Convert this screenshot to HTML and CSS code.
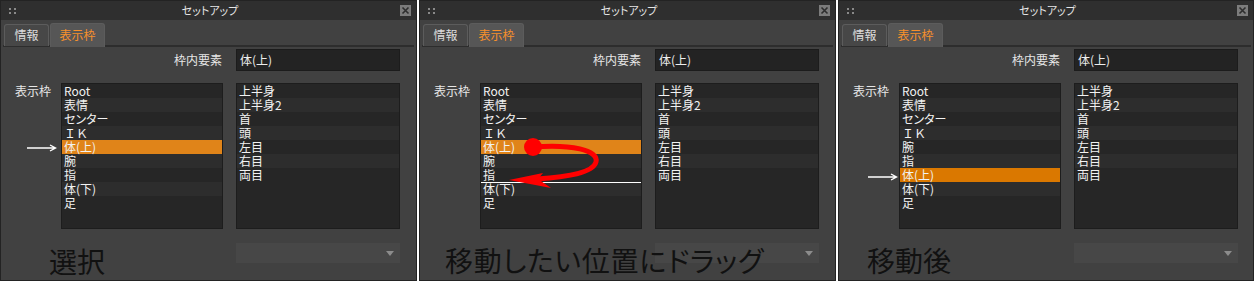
FILE: index.html
```html
<!DOCTYPE html>
<html lang="ja">
  <head>
    <meta charset="utf-8">
    <link rel="stylesheet" href="styles.css">
  </head>
  <body>
    <div class="strip">

    <section class="panel">
      <header class="titlebar">
        <span class="grip"><i></i><i></i><i></i><i></i></span>
        <span class="title">セットアップ</span>
        <span class="close"><svg width="11" height="11" viewBox="0 0 11 11"><path d="M2.5 2.5 L8.5 8.5 M8.5 2.5 L2.5 8.5" stroke="#2e2e2e" stroke-width="1.6"/></svg></span>
      </header>
      <nav class="tabs">
        <span class="tab">情報</span>
        <span class="tab active">表示枠</span>
      </nav>
      <div class="form">
        <label class="flabel">枠内要素</label>
        <div class="field">体(上)</div>
        <label class="llabel">表示枠</label>
        <ul class="list frames">
          <li>Root</li>
          <li>表情</li>
          <li>センター</li>
          <li class="wide">ＩＫ</li>
          <li class="sel">体(上)</li>
          <li>腕</li>
          <li>指</li>
          <li>体(下)</li>
          <li>足</li>
        </ul>
        <ul class="list bones">
          <li>上半身</li>
          <li>上半身2</li>
          <li>首</li>
          <li>頭</li>
          <li>左目</li>
          <li>右目</li>
          <li>両目</li>
        </ul>
        <div class="combo"><span class="caret"></span></div>
      </div>
      <svg class="pointer p-first" width="30" height="8" viewBox="0 0 30 8"><path d="M0 4 H28 M23 1 L28.5 4 L23 7" stroke="#fff" stroke-width="1.4" fill="none"/></svg>
      <p class="caption c-first">選択</p>
    </section>

    <section class="panel">
      <header class="titlebar">
        <span class="grip"><i></i><i></i><i></i><i></i></span>
        <span class="title">セットアップ</span>
        <span class="close"><svg width="11" height="11" viewBox="0 0 11 11"><path d="M2.5 2.5 L8.5 8.5 M8.5 2.5 L2.5 8.5" stroke="#2e2e2e" stroke-width="1.6"/></svg></span>
      </header>
      <nav class="tabs">
        <span class="tab">情報</span>
        <span class="tab active">表示枠</span>
      </nav>
      <div class="form">
        <label class="flabel">枠内要素</label>
        <div class="field">体(上)</div>
        <label class="llabel">表示枠</label>
        <ul class="list frames">
          <li>Root</li>
          <li>表情</li>
          <li>センター</li>
          <li class="wide">ＩＫ</li>
          <li class="sel">体(上)</li>
          <li>腕</li>
          <li>指</li>
          <li class="drop">体(下)</li>
          <li>足</li>
        </ul>
        <ul class="list bones">
          <li>上半身</li>
          <li>上半身2</li>
          <li>首</li>
          <li>頭</li>
          <li>左目</li>
          <li>右目</li>
          <li>両目</li>
        </ul>
        <div class="combo"><span class="caret"></span></div>
      </div>
      <svg class="drag" width="417" height="282" viewBox="0 0 417 282">
        <circle cx="114" cy="147" r="9" fill="#f00"/>
        <path d="M114 147 C152 144 180 150 177 162 C174 173 148 177 118 179" stroke="#f00" stroke-width="5" fill="none"/>
        <polygon points="90,180 124,173 119,179 132,188" fill="#f00"/>
      </svg>
      <p class="caption c-second">移動したい位置にドラッグ</p>
    </section>

    <section class="panel">
      <header class="titlebar">
        <span class="grip"><i></i><i></i><i></i><i></i></span>
        <span class="title">セットアップ</span>
        <span class="close"><svg width="11" height="11" viewBox="0 0 11 11"><path d="M2.5 2.5 L8.5 8.5 M8.5 2.5 L2.5 8.5" stroke="#2e2e2e" stroke-width="1.6"/></svg></span>
      </header>
      <nav class="tabs">
        <span class="tab">情報</span>
        <span class="tab active">表示枠</span>
      </nav>
      <div class="form">
        <label class="flabel">枠内要素</label>
        <div class="field">体(上)</div>
        <label class="llabel">表示枠</label>
        <ul class="list frames">
          <li>Root</li>
          <li>表情</li>
          <li>センター</li>
          <li class="wide">ＩＫ</li>
          <li>腕</li>
          <li>指</li>
          <li class="sel moved">体(上)</li>
          <li>体(下)</li>
          <li>足</li>
        </ul>
        <ul class="list bones">
          <li>上半身</li>
          <li>上半身2</li>
          <li>首</li>
          <li>頭</li>
          <li>左目</li>
          <li>右目</li>
          <li>両目</li>
        </ul>
        <div class="combo"><span class="caret"></span></div>
      </div>
      <svg class="pointer p-third" width="30" height="8" viewBox="0 0 30 8"><path d="M0 4 H28 M23 1 L28.5 4 L23 7" stroke="#fff" stroke-width="1.4" fill="none"/></svg>
      <p class="caption c-third">移動後</p>
    </section>

    </div>
  </body>
</html>
```

FILE: styles.css
```css
html, body {
  margin: 0;
  padding: 0;
  background: #fff;
}
body {
  font-family: "Noto Sans CJK JP", "Noto Sans", sans-serif;
  font-size: 12px;
  font-feature-settings: "palt";
  color: #eee;
}
.strip {
  display: flex;
  gap: 2px;
  width: 1254px;
  height: 282px;
}
.panel {
  position: relative;
  box-sizing: border-box;
  width: 417px;
  height: 281px;
  background: #414141;
  border: 1px solid #232323;
  overflow: hidden;
}
.panel:last-child {
  width: 416px;
}

/* title bar */
.titlebar {
  display: grid;
  grid-template-columns: 1fr auto 1fr;
  align-items: center;
  height: 19px;
  background: #2f2f2f;
  padding: 0 5px 0 8px;
}
.grip {
  display: grid;
  grid-template-columns: 2px 2px;
  gap: 2px 3px;
}
.grip i {
  display: block;
  width: 2px;
  height: 2px;
  background: #8a8a8a;
}
.title {
  color: #e6e6e6;
  font-size: 11px;
  line-height: 19px;
}
.close {
  justify-self: end;
  display: flex;
  width: 11px;
  height: 11px;
  background: #7c7c7c;
}

/* tabs */
.tabs {
  display: flex;
  align-items: flex-end;
  gap: 1px;
  height: 25px;
  margin: 0 2px 0 2px;
  padding-left: 1px;
  border-bottom: 2px solid #2d2d2d;
}
.tab {
  box-sizing: border-box;
  width: 45px;
  height: 22px;
  margin-bottom: -1px;
  background: #474747;
  border: 1px solid #5c5c5c;
  border-bottom: none;
  border-radius: 3px 3px 0 0;
  color: #dcdcdc;
  font-size: 12px;
  line-height: 20px;
  text-align: center;
}
.tab.active {
  width: 55px;
  height: 24px;
  margin-bottom: -2px;
  background: #565656;
  color: #f7902c;
  line-height: 22px;
}

/* form */
.form {
  display: grid;
  grid-template-columns: 60px 162px 13px 164px;
  grid-template-rows: 22px 12px 146px 14px 20px;
  grid-template-areas:
    "flabel flabel . field"
    ". . . ."
    "llabel frames . bones"
    ". . . ."
    ". . . combo";
  padding-top: 2px;
}
.flabel {
  grid-area: flabel;
  justify-self: end;
  padding-right: 1px;
  line-height: 22px;
  color: #e6e6e6;
}
.field {
  grid-area: field;
  box-sizing: border-box;
  background: #232323;
  border: 1px solid #1c1c1c;
  padding-left: 3px;
  line-height: 20px;
}
.llabel {
  grid-area: llabel;
  padding: 1px 0 0 14px;
  line-height: 14px;
  color: #e6e6e6;
}
.list {
  box-sizing: border-box;
  margin: 0;
  padding: 0;
  list-style: none;
  background: #262626;
  border: 1px solid #1d1d1d;
}
.frames {
  grid-area: frames;
}
.bones {
  grid-area: bones;
}
.list li {
  height: 14px;
  line-height: 14px;
  padding-left: 2px;
  color: #f2f2f2;
  white-space: nowrap;
}
.list li.wide {
  font-feature-settings: normal;
}
.list li:nth-child(even) {
  background: #2d2d2d;
}
.list li.sel {
  background: #e08419;
}
.list li.sel.moved {
  background: #da7800;
}
.list li.drop {
  box-shadow: inset 0 1px #fff;
}
.combo {
  grid-area: combo;
  position: relative;
  background: #474747;
}
.caret {
  position: absolute;
  right: 6px;
  top: 8px;
  border-left: 4px solid transparent;
  border-right: 4px solid transparent;
  border-top: 5px solid #8c8c8c;
}

/* annotations */
.pointer {
  position: absolute;
}
.p-first {
  left: 26px;
  top: 143px;
}
.p-third {
  left: 29px;
  top: 172px;
}
.drag {
  position: absolute;
  left: -1px;
  top: -1px;
}
.caption {
  position: absolute;
  margin: 0;
  color: #111;
  font-size: 28px;
  line-height: 28px;
  white-space: nowrap;
}
.c-first {
  left: 48px;
  top: 246px;
}
.c-second {
  left: 25px;
  top: 245px;
  letter-spacing: 0.8px;
}
.c-third {
  left: 28px;
  top: 245px;
}
```
